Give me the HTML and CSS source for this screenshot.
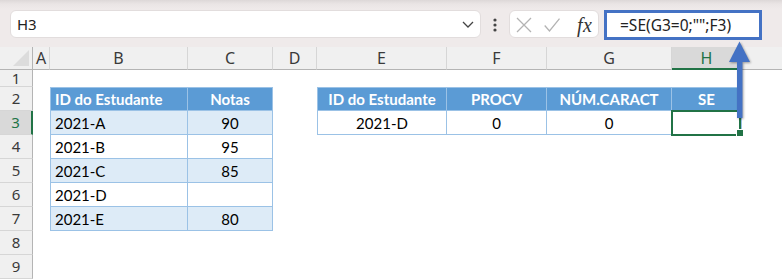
FILE: index.html
```html
<!DOCTYPE html>
<html lang="pt">
<head>
<meta charset="utf-8">
<title>Excel SE</title>
<link rel="stylesheet" href="styles.css">
</head>
<body>
<div class="app">
  <div class="toolbar">
    <div class="namebox">
      <span class="name">H3</span>
      <svg class="chev" width="12" height="7" viewBox="0 0 12 7"><polyline points="1,1 6,6 11,1" fill="none" stroke="#444" stroke-width="1.3"/></svg>
    </div>
    <div class="more">
      <svg width="4" height="14" viewBox="0 0 4 14"><circle cx="2" cy="2" r="1.6" fill="#444"/><circle cx="2" cy="7" r="1.6" fill="#444"/><circle cx="2" cy="12" r="1.6" fill="#444"/></svg>
    </div>
    <div class="fxbox">
      <svg class="x-icon" width="16" height="16" viewBox="0 0 16 16"><path d="M1 1 L15 15 M15 1 L1 15" stroke="#b3b3b3" stroke-width="1.3" fill="none"/></svg>
      <svg class="ok-icon" width="16" height="14" viewBox="0 0 16 14"><polyline points="0.7,7.5 5.5,13 15.5,0.7" stroke="#b3b3b3" stroke-width="1.3" fill="none"/></svg>
      <span class="fx">fx</span>
    </div>
    <div class="formula">=SE(G3=0;"";F3)</div>
  </div>

  <div class="sheet">
    <!-- column headers -->
    <div class="corner"><svg width="16" height="16" viewBox="0 0 16 16"><polygon points="16,0 16,16 0,16" fill="#dcdcdc"/></svg></div>
    <div class="ch">A</div>
    <div class="ch">B</div>
    <div class="ch">C</div>
    <div class="ch">D</div>
    <div class="ch">E</div>
    <div class="ch">F</div>
    <div class="ch">G</div>
    <div class="ch ch-sel">H</div>
    <div class="ch ch-last"></div>

    <!-- row 1 -->
    <div class="rh">1</div>
    <div></div><div></div><div></div><div></div><div></div><div></div><div></div><div></div><div></div>

    <!-- row 2 -->
    <div class="rh">2</div>
    <div></div>
    <div class="t tl th">ID do Estudante</div>
    <div class="t th ctr">Notas</div>
    <div></div>
    <div class="t tl th ctr">ID do Estudante</div>
    <div class="t th ctr">PROCV</div>
    <div class="t th ctr">NÚM.CARACT</div>
    <div class="t th ctr">SE</div>
    <div></div>

    <!-- row 3 -->
    <div class="rh rh-sel">3</div>
    <div></div>
    <div class="t tl band">2021-A</div>
    <div class="t band ctr">90</div>
    <div></div>
    <div class="t tl ctr">2021-D</div>
    <div class="t ctr">0</div>
    <div class="t ctr">0</div>
    <div class="t sel"></div>
    <div></div>

    <!-- row 4 -->
    <div class="rh">4</div>
    <div></div>
    <div class="t tl">2021-B</div>
    <div class="t ctr">95</div>
    <div></div><div></div><div></div><div></div><div></div><div></div>

    <!-- row 5 -->
    <div class="rh">5</div>
    <div></div>
    <div class="t tl band">2021-C</div>
    <div class="t band ctr">85</div>
    <div></div><div></div><div></div><div></div><div></div><div></div>

    <!-- row 6 -->
    <div class="rh">6</div>
    <div></div>
    <div class="t tl">2021-D</div>
    <div class="t ctr"></div>
    <div></div><div></div><div></div><div></div><div></div><div></div>

    <!-- row 7 -->
    <div class="rh">7</div>
    <div></div>
    <div class="t tl band">2021-E</div>
    <div class="t band ctr">80</div>
    <div></div><div></div><div></div><div></div><div></div><div></div>

    <!-- row 8 -->
    <div class="rh">8</div>
    <div></div><div></div><div></div><div></div><div></div><div></div><div></div><div></div><div></div>

    <!-- row 9 -->
    <div class="rh">9</div>
    <div></div><div></div><div></div><div></div><div></div><div></div><div></div><div></div><div></div>
  </div>

  <svg class="arrow" width="30" height="86" viewBox="0 0 30 86">
    <rect x="11" y="22" width="5.5" height="58" fill="#4472c4"/>
    <polygon points="13.5,3.5 3,24 24,24" fill="#4472c4"/>
  </svg>
</div>
</body>
</html>
```

FILE: styles.css
```css
* { box-sizing: border-box; }

html, body {
  margin: 0;
  padding: 0;
  background: #ffffff;
}

.app {
  position: relative;
  width: 782px;
  height: 280px;
  overflow: hidden;
  font-family: "Noto Sans", "Open Sans", sans-serif;
}

/* ---------- formula bar ---------- */
.toolbar {
  height: 47px;
  display: flex;
  align-items: flex-start;
  padding: 10px 0 0 10px;
  background: linear-gradient(#ddd8d8 0px, #eae5e5 4px, #efeaea 9px, #efeaea 100%);
}

.namebox {
  width: 471px;
  height: 28px;
  background: #ffffff;
  border: 1px solid #e2dddd;
  border-radius: 6px;
  display: flex;
  align-items: center;
  justify-content: space-between;
  padding: 0 6px 0 6px;
}

.name {
  font-size: 15px;
  color: #222;
  line-height: 1;
}

.chev { margin-top: 1px; }

.more {
  width: 28px;
  height: 28px;
  display: flex;
  align-items: center;
  justify-content: center;
  padding-top: 1px;
}

.fxbox {
  width: 90px;
  height: 28px;
  background: #ffffff;
  border: 1px solid #e2dddd;
  border-radius: 6px;
  display: flex;
  align-items: center;
  padding-left: 6px;
}

.x-icon { margin-top: 1px; }
.ok-icon { margin-left: 12px; margin-top: 2px; }

.fx {
  margin-left: 17px;
  font-family: "Liberation Serif", "DejaVu Serif", serif;
  font-style: italic;
  font-size: 20px;
  color: #333;
  line-height: 1;
  letter-spacing: 0.5px;
  margin-top: 1px;
}

.formula {
  margin-left: 5px;
  width: 158px;
  height: 30px;
  background: #ffffff;
  border: 3px solid #4472c4;
  padding-left: 13px;
  display: flex;
  align-items: center;
  font-size: 15.5px;
  color: #222;
  white-space: nowrap;
}

/* ---------- sheet ---------- */
.sheet {
  display: grid;
  grid-template-columns: 33px 17px 138px 85px 44px 130px 100px 125px 70px 1fr;
  grid-template-rows: 23px 17px repeat(8, 24px);
  background: #ffffff;
}

.corner {
  background: #f0f0f0;
  border-right: 1px solid #b4b4b4;
  border-bottom: 1px solid #b4b4b4;
  display: flex;
  align-items: flex-end;
  justify-content: flex-end;
  padding: 0 3px 3px 0;
}

.ch {
  background: #f0f0f0;
  border-right: 1px solid #d6d6d6;
  border-bottom: 1px solid #b4b4b4;
  display: flex;
  align-items: center;
  justify-content: center;
  font-size: 16px;
  color: #3a3a3a;
  line-height: 1;
}

.ch-sel {
  background: #d9d9d9;
  color: #217346;
  border-bottom: 2px solid #217346;
  padding-top: 1px;
}

.ch-last { border-right: none; }

.rh {
  background: #f0f0f0;
  border-right: 1px solid #b4b4b4;
  border-bottom: 1px solid #d6d6d6;
  display: flex;
  align-items: center;
  justify-content: center;
  font-size: 15px;
  color: #3a3a3a;
  line-height: 1;
}

.rh-sel {
  background: #d9d9d9;
  color: #217346;
  border-right: 2px solid #217346;
}

/* table cells */
.t {
  font-family: Lato, "Liberation Sans", sans-serif;
  font-size: 15px;
  color: #000;
  border-right: 1px solid #9bc2e6;
  border-bottom: 1px solid #9bc2e6;
  display: flex;
  align-items: center;
  padding: 2px 4px 0 4px;
  white-space: nowrap;
  line-height: 1;
}

.tl { border-left: 1px solid #9bc2e6; }

.th {
  background: #5b9bd5;
  color: #ffffff;
  font-weight: 700;
  border-top: 1px solid #9bc2e6;
  padding-top: 1px;
}

.band { background: #ddebf7; }

.ctr { justify-content: center; }

.sel { position: relative; }

.sel::after {
  content: "";
  position: absolute;
  left: -1px;
  top: -1px;
  right: 0;
  bottom: -2px;
  border: 2px solid #217346;
}

.sel::before {
  content: "";
  position: absolute;
  right: -3px;
  bottom: -3px;
  width: 6px;
  height: 6px;
  background: #217346;
  border: 1px solid #ffffff;
  z-index: 2;
}

/* ---------- callout arrow ---------- */
.arrow {
  position: absolute;
  left: 726px;
  top: 38px;
  filter: drop-shadow(1.5px 1.5px 1.2px rgba(0, 0, 0, 0.35));
}
```
